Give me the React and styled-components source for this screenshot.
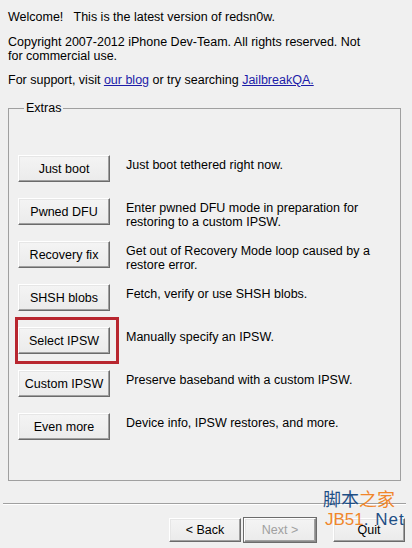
import React from 'react'
import styled, {createGlobalStyle} from 'styled-components'

const Global = createGlobalStyle`
  html, body {
    margin: 0;
    padding: 0;
    background: #f0f0f0;
  }
  body {
    font-family: "Liberation Sans", Arial, sans-serif;
    font-size: 12.5px;
    color: #000;
  }
`

const Window = styled.div`
  position: relative;
  width: 412px;
  height: 548px;
  overflow: hidden;
  background: #f0f0f0;
`

const Content = styled.div`
  padding: 10px 8px 0 8px;
`

const Para = styled.p`
  margin: 0 0 ${p => p.$gap || 11}px 0;
  line-height: 14px;
  width: ${p => p.$width || 'auto'};
`

const Link = styled.a`
  color: #1c1ca8;
  text-decoration: underline;
`

const Group = styled.fieldset`
  margin: 14px 3px 0 0;
  padding: 40px 9px 40px 9px;
  border: 1px solid #a0a0a0;
  min-inline-size: 0;
  legend {
    padding: 0 2px;
    margin-left: 6px;
    line-height: 14px;
  }
`

const Rows = styled.div`
  display: grid;
  grid-template-columns: 92px 1fr;
  grid-auto-rows: 27px;
  column-gap: 16px;
  row-gap: 16px;
`

const Cell = styled.div`
  position: relative;
  display: flex;
`

const Btn = styled.button`
  font-family: "Liberation Sans", Arial, sans-serif;
  font-size: 12.5px;
  color: ${p => (p.disabled ? '#a0a0a0' : '#000')};
  width: ${p => p.$w || 92}px;
  height: ${p => p.$h || 27}px;
  padding: 0;
  background: linear-gradient(#f4f4f4, #ebebeb);
  border: 1px solid;
  border-color: #fff #6b6b6b #6b6b6b #fff;
  box-shadow: inset -1px -1px #a0a0a0, inset 1px 1px #e6e6e6;
  ${p => p.$default && `
    outline: 1px solid #6b6b6b;
    outline-offset: 0;
    border-color: #fff #8a8a8a #8a8a8a #fff;
  `}
`

const Highlight = styled.span`
  position: absolute;
  left: -3px;
  top: -10px;
  width: 98px;
  height: 41px;
  border: 3px solid #b8262f;
  pointer-events: none;
`

const Desc = styled.div`
  line-height: 14px;
  padding-top: 3px;
  width: 262px;
`

const Separator = styled.hr`
  margin: 22px 6px 0 3px;
  border: 0;
  border-top: 1px solid #a0a0a0;
  border-bottom: 1px solid #fff;
  height: 0;
`

const Footer = styled.div`
  display: flex;
  justify-content: flex-end;
  padding: 13px 7px 0 0;
  gap: 3px;
`

const Spacer = styled.div`
  width: 11px;
`

const Watermark = styled.div`
  position: absolute;
  left: 323px;
  top: 487px;
  display: flex;
  flex-direction: column;
  pointer-events: none;
`

const Cn = styled.div`
  font-family: "Noto Sans CJK SC", sans-serif;
  font-size: 18px;
  line-height: 22px;
`

const En = styled.div`
  font-family: "Liberation Sans", Arial, sans-serif;
  font-size: 17px;
  line-height: 22px;
  padding-left: 2px;
`

const Blue = styled.span`
  color: #1e4f86;
  letter-spacing: ${p => p.$spread || 0}px;
`

const Orange = styled.span`
  color: #f0862a;
`

const extras = [
  ['Just boot', 'Just boot tethered right now.'],
  ['Pwned DFU', 'Enter pwned DFU mode in preparation for restoring to a custom IPSW.'],
  ['Recovery fix', 'Get out of Recovery Mode loop caused by a restore error.'],
  ['SHSH blobs', 'Fetch, verify or use SHSH blobs.'],
  ['Select IPSW', 'Manually specify an IPSW.', true],
  ['Custom IPSW', 'Preserve baseband with a custom IPSW.'],
  ['Even more', 'Device info, IPSW restores, and more.'],
]

export default function App() {
  return (
    <Window>
      <Global />
      <Content>
        <Para>Welcome!&nbsp;&nbsp; This is the latest version of redsn0w.</Para>
        <Para $gap={10} $width="356px">
          Copyright 2007-2012 iPhone Dev-Team. All rights reserved. Not for commercial use.
        </Para>
        <Para $gap={0}>
          For support, visit <Link href="#">our blog</Link> or try searching <Link href="#">JailbreakQA.</Link>
        </Para>
        <Group>
          <legend>Extras</legend>
          <Rows>
            {extras.map(([label, text, marked]) => (
              <React.Fragment key={label}>
                <Cell>
                  <Btn>{label}</Btn>
                  {marked && <Highlight />}
                </Cell>
                <Desc>{text}</Desc>
              </React.Fragment>
            ))}
          </Rows>
        </Group>
      </Content>
      <Separator />
      <Footer>
        <Btn $w={72} $h={24}>&lt; Back</Btn>
        <Btn $w={72} $h={24} disabled $default>Next &gt;</Btn>
        <Spacer />
        <Btn $w={72} $h={24}>Quit</Btn>
      </Footer>
      <Watermark>
        <Cn><Blue>脚本</Blue><Orange>之家</Orange></Cn>
        <En><Orange>JB51</Orange><Blue $spread={1}>. Net</Blue></En>
      </Watermark>
    </Window>
  )
}
